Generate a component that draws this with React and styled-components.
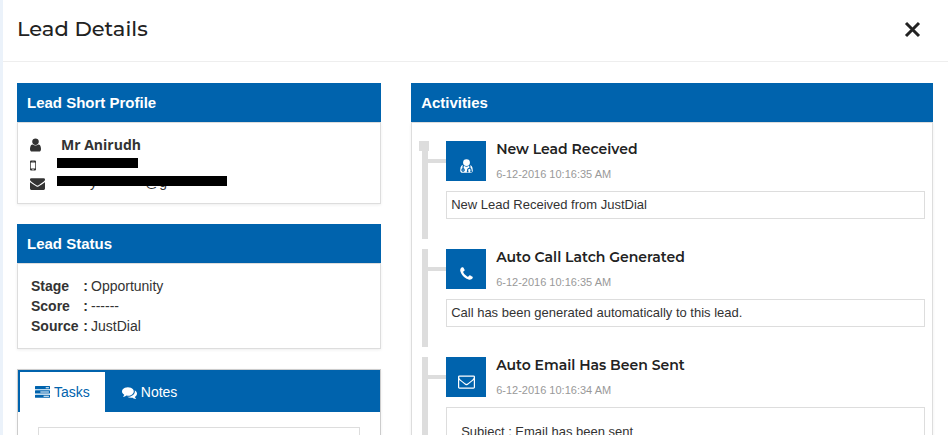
import React from "react";
import styled, { createGlobalStyle } from "styled-components";

const BLUE = "#0063ad";
const LINE = "#dddddd";
const HEADING = 'Montserrat, "Inter", sans-serif';

const GlobalStyle = createGlobalStyle`
  *, *::before, *::after { box-sizing: border-box; }
  body {
    margin: 0;
    background: #ebf2fa;
    color: #333;
    font: 14px/20px "Liberation Sans", Arial, sans-serif;
  }
  h1, h2, h3, p, ul, ol, dl, dd { margin: 0; padding: 0; }
  ul, ol { list-style: none; }
`;

const Dialog = styled.main`
  height: 100vh;
  margin-left: 3px;
  overflow: hidden;
  background: #fff;
`;

const DialogHeader = styled.header`
  display: flex;
  align-items: center;
  justify-content: space-between;
  padding: 14px 27px 17px 14px;
  border-bottom: 1px solid #eee;
`;

const Title = styled.h1`
  color: #222;
  font: 500 21px/30px ${HEADING};
`;

const CloseButton = styled.button`
  display: flex;
  padding: 0;
  border: 0;
  background: none;
  color: #222;
  cursor: pointer;
`;

const Columns = styled.div`
  display: grid;
  grid-template-columns: repeat(12, minmax(0, 1fr));
  align-items: start;
  column-gap: 30px;
  padding: 21px 15px 20px 14px;
`;

const Column = styled.div`
  grid-column: span ${(p) => p.$span};
  display: grid;
  gap: 20px;
`;

const PanelHeader = styled.h2`
  padding: 10px 10px 9px;
  background: ${BLUE};
  color: #fff;
  font-size: 15px;
  line-height: 20px;
`;

const PanelBody = styled.div`
  padding: ${(p) => p.$pad};
  border: 1px solid ${LINE};
  box-shadow: 0 1px 3px rgba(0, 0, 0, 0.07);
`;

const ContactList = styled.ul`
  display: grid;
  grid-template-rows: 22px 18px 18px;
`;

const ContactRow = styled.li`
  display: grid;
  grid-template-columns: 27px 1fr;
  align-items: center;
`;

const Name = styled.strong`
  padding-left: 4px;
  font: 700 14px/20px "Open Sans", sans-serif;
`;

const Masked = styled.span`
  position: relative;
  display: flex;
  gap: 48px;
  width: ${(p) => p.$width};
  height: 10px;
  margin-bottom: 4px;
  padding-left: 33px;
  line-height: 12px;

  &::after {
    content: "";
    position: absolute;
    inset: 0;
    background: #000;
  }
`;

const StatusRow = styled.div`
  display: flex;
  gap: 3px;
`;

const StatusLabel = styled.dt`
  display: flex;
  justify-content: space-between;
  width: 57px;
  font-weight: 700;
`;

const TabPanel = styled.section`
  border: 1px solid #ccc;
  box-shadow: 0 1px 3px rgba(0, 0, 0, 0.07);
`;

const TabBar = styled.div`
  display: flex;
  gap: 2px;
  padding: 2px 2px 0;
  background: ${BLUE};
`;

const Tab = styled.button`
  display: flex;
  align-items: center;
  gap: 4px;
  padding: 10px 15px;
  border: 0;
  background: ${(p) => (p.$active ? "#fff" : "transparent")};
  color: ${(p) => (p.$active ? BLUE : "#fff")};
  font: inherit;
  cursor: pointer;
`;

const TabContent = styled.div`
  padding: 15px 20px;
`;

const TaskBox = styled.div`
  height: 120px;
  border: 1px solid ${LINE};
`;

const Timeline = styled.ol`
  display: grid;
  gap: 10px;
`;

const Entry = styled.li`
  position: relative;
  padding: 0 0 20px 18px;
  border-left: 6px solid ${LINE};

  &::before {
    content: "";
    position: absolute;
    top: 18px;
    left: 0;
    width: 18px;
    height: 4px;
    background: ${LINE};
  }

  &:first-child::after {
    content: "";
    position: absolute;
    top: 0;
    left: -9px;
    width: 10px;
    height: 10px;
    background: ${LINE};
  }
`;

const EntryHead = styled.div`
  display: flex;
  gap: 10px;
  margin-bottom: 10px;
`;

const Badge = styled.span`
  display: flex;
  align-items: center;
  justify-content: center;
  width: 40px;
  height: 40px;
  padding-top: 9px;
  background: ${BLUE};
  color: #fff;
`;

const EntryTitle = styled.h3`
  color: #222;
  font: 600 14px/16px ${HEADING};
`;

const Stamp = styled.time`
  display: block;
  margin-top: 10px;
  color: #999;
  font-size: 11px;
  line-height: 14px;
`;

const Message = styled.p`
  padding: ${(p) => (p.$roomy ? "15px 14px" : "4px")};
  border: 1px solid ${LINE};
  font-size: 13px;
  line-height: 18px;
`;

const GLYPHS = {
  user: [
    1280,
    "M1280 1399q0 109-62.5 187t-150.5 78h-854q-88 0-150.5-78t-62.5-187q0-85 8.5-160.5t31.5-152 58.5-131 94-89 134.5-34.5q131 128 313 128t313-128q76 0 134.5 34.5t94 89 58.5 131 31.5 152 8.5 160.5zm-256-887q0 159-112.5 271.5t-271.5 112.5-271.5-112.5-112.5-271.5 112.5-271.5 271.5-112.5 271.5 112.5 112.5 271.5z",
  ],
  mobile: [
    768,
    "M464 1408a80 80 0 1 0-160 0a80 80 0 1 0 160 0zM672 1248V544q0-32-32-32H128q-32 0-32 32v704q0 32 32 32h512q32 0 32-32zM480 400q0-16-16-16H304q-16 0-16 16t16 16h160q16 0 16-16zM768 384v1024q0 128-128 128H128Q0 1536 0 1408V384Q0 256 128 256h512q128 0 128 128z",
  ],
  envelope: [
    1792,
    "M1792 710v794q0 66-47 113t-113 47h-1472q-66 0-113-47t-47-113v-794q44 49 101 87 362 246 497 345 57 42 92.5 65.5t94.5 48 110 24.5h2q51 0 110-24.5t94.5-48 92.5-65.5q170-123 498-345 57-39 100-87zm0-294q0 79-49 151t-122 123q-376 261-468 325-10 7-42.5 31t-54 38.5-52 32.5-57.5 27-50 9h-2q-23 0-50-9t-57.5-27-52-32.5-54-38.5-42.5-31q-91-64-262-182.5t-205-142.5q-62-42-117-115.5t-55-136.5q0-78 41.5-130t118.5-52h1472q65 0 112.5 47t47.5 113z",
  ],
  envelopeOpen: [
    1792,
    "M1664 1504v-768q-32 36-69 66-268 206-426 338-51 43-83 67t-86.5 48.5-102.5 24.5h-2q-48 0-102.5-24.5t-86.5-48.5-83-67q-158-132-426-338-37-30-69-66v768q0 13 9.5 22.5t22.5 9.5h1472q13 0 22.5-9.5t9.5-22.5zm0-1051v-24.5l-.5-13-3-12.5-5.5-9-9-7.5-14-2.5h-1472q-13 0-22.5 9.5t-9.5 22.5q0 168 147 284 193 152 401 317 6 5 35 29.5t46 37.5 44.5 31.5 50.5 27.5 43 9h2q20 0 43-9t50.5-27.5 44.5-31.5 46-37.5 35-29.5q208-165 401-317 54-43 100.5-115.5t46.5-131.5zm128-37v1088q0 66-47 113t-113 47h-1472q-66 0-113-47t-47-113v-1088q0-66 47-113t113-47h1472q66 0 113 47t47 113z",
  ],
  phone: [
    1408,
    "M1408 1240q0 27-10 70.5t-21 68.5q-21 50-122 106-94 51-186 51-27 0-53-3.5t-57.5-12.5-47-14.5-55.5-20.5-49-18q-98-35-175-83-127-79-264-216t-216-264q-48-77-83-175-3-9-18-49t-20.5-55.5-14.5-47-12.5-57.5-3.5-53q0-92 51-186 56-101 106-122 25-11 68.5-21t70.5-10q14 0 21 3 18 6 53 76 11 19 30 54t35 63.5 31 53.5q3 4 17.5 25t21.5 35.5 7 28.5q0 20-28.5 50t-62 55-62 53-28.5 46q0 9 5 22.5t8.5 20.5 14 24 11.5 19q76 137 174 235t235 174q2 1 19 11.5t24 14 20.5 8.5 22.5 5q18 0 46-28.5t53-62 55-62 50-28.5q14 0 28.5 7t35.5 21.5 25 17.5q25 15 53.5 31t63.5 35 54 30q70 35 76 53 3 7 3 21z",
  ],
  comments: [
    1792,
    "M1408 768q0 139-94 257t-256.5 186.5-353.5 68.5q-86 0-176-16-124 88-278 128-36 9-86 16h-3q-11 0-20.5-8t-11.5-21q-1-3-1-6.5t.5-6.5 2-6l2.5-5 3.5-5.5 4-5 4.5-5 4-4.5q5-6 23-25t26-29.5 22.5-29 25-38.5 20.5-44q-124-72-195-177t-71-224q0-139 94-257t256.5-186.5 353.5-68.5 353.5 68.5 256.5 186.5 94 257zm384 256q0 120-71 224.5t-195 176.5q10 24 20.5 44t25 38.5 22.5 29 26 29.5 23 25q1 1 4 4.5t4.5 5 4 5 3.5 5.5l2.5 5 2 6 .5 6.5-1 6.5q-3 14-13 22t-22 7q-50-7-86-16-154-40-278-128-90 16-176 16-271 0-472-132 58 4 88 4 161 0 309-45t264-129q125-92 192-212t67-254q0-77-23-152 129 71 204 178t75 230z",
  ],
  tasks: [
    1792,
    "M1024 1408h640v-128h-640v128zm-384-512h1024v-128H640v128zm640-512h384V256h-384v128zm512 832v256q0 64-64 64H64q-64 0-64-64v-256q0-64 64-64h1664q64 0 64 64zm0-512v256q0 64-64 64H64q-64 0-64-64V704q0-64 64-64h1664q64 0 64 64zm0-512v256q0 64-64 64H64q-64 0-64-64V192q0-64 64-64h1664q64 0 64 64z",
  ],
  doctor: [
    1408,
    "M1088 512a384 384 0 1 1-768 0a384 384 0 1 1 768 0zM384 1344a64 64 0 1 0-128 0a64 64 0 1 0 128 0zM1408 1405q0 121-73 190t-194 69H267q-121 0-194-69T0 1405q0-400 132-540q70-78 180-82q-56 90-56 241v136q-128 46-128 184q0 80 56 136t136 56t136-56t56-136q0-138-128-184v-136q0-117 46-154q132 101 274 101t274-101q46 50 46 154v64q-106 0-181 75t-75 181v89q-32 29-32 71q0 96 96 96t96-96q0-42-32-71v-89q0-52 38-90t90-38t90 38t38 90v89q-32 29-32 71q0 96 96 96t96-96q0-42-32-71v-89q0-165-128-223v-96q0-151-56-209q110 4 180 82q132 140 132 540z",
  ],
};

function Glyph({ name, size }) {
  const [width, d] = GLYPHS[name];
  return (
    <svg
      width={Math.round((size * width) / 1792)}
      height={size}
      viewBox={`0 0 ${width} 1792`}
      fill="currentColor"
      aria-hidden="true"
    >
      <path d={d} />
    </svg>
  );
}

const STATUS = [
  ["Stage", "Opportunity"],
  ["Score", "------"],
  ["Source", "JustDial"],
];

const ACTIVITIES = [
  { icon: "doctor", title: "New Lead Received", time: "6-12-2016 10:16:35 AM", text: "New Lead Received from JustDial" },
  { icon: "phone", title: "Auto Call Latch Generated", time: "6-12-2016 10:16:35 AM", text: "Call has been generated automatically to this lead." },
  { icon: "envelopeOpen", title: "Auto Email Has Been Sent", time: "6-12-2016 10:16:34 AM", text: "Subject : Email has been sent", roomy: true },
];

export default function App() {
  return (
    <>
      <GlobalStyle />
      <Dialog>
        <DialogHeader>
          <Title>Lead Details</Title>
          <CloseButton type="button" aria-label="Close">
            <svg width="17" height="17" viewBox="0 0 17 17" fill="none" stroke="currentColor" strokeWidth="3">
              <path d="M2 2l13 13M15 2L2 15" />
            </svg>
          </CloseButton>
        </DialogHeader>
        <Columns>
          <Column $span={5}>
            <section>
              <PanelHeader>Lead Short Profile</PanelHeader>
              <PanelBody $pad="11px 12px">
                <ContactList>
                  <ContactRow>
                    <Glyph name="user" size={16} />
                    <Name>Mr Anirudh</Name>
                  </ContactRow>
                  <ContactRow>
                    <Glyph name="mobile" size={15} />
                    <Masked $width="81px" />
                  </ContactRow>
                  <ContactRow>
                    <Glyph name="envelope" size={15} />
                    <Masked $width="170px">
                      <span>y</span>
                      <span>@g</span>
                    </Masked>
                  </ContactRow>
                </ContactList>
              </PanelBody>
            </section>
            <section>
              <PanelHeader>Lead Status</PanelHeader>
              <PanelBody $pad="12px 13px">
                <dl>
                  {STATUS.map(([label, value]) => (
                    <StatusRow key={label}>
                      <StatusLabel>
                        <span>{label}</span>
                        <span>:</span>
                      </StatusLabel>
                      <dd>{value}</dd>
                    </StatusRow>
                  ))}
                </dl>
              </PanelBody>
            </section>
            <TabPanel>
              <TabBar role="tablist">
                <Tab type="button" role="tab" aria-selected="true" $active>
                  <Glyph name="tasks" size={15} />
                  Tasks
                </Tab>
                <Tab type="button" role="tab" aria-selected="false">
                  <Glyph name="comments" size={15} />
                  Notes
                </Tab>
              </TabBar>
              <TabContent role="tabpanel">
                <TaskBox />
              </TabContent>
            </TabPanel>
          </Column>
          <Column $span={7}>
            <section>
              <PanelHeader>Activities</PanelHeader>
              <PanelBody $pad="18px 7px 18px 10px">
                <Timeline>
                  {ACTIVITIES.map((item) => (
                    <Entry key={item.title}>
                      <EntryHead>
                        <Badge>
                          <Glyph name={item.icon} size={item.icon === "envelopeOpen" ? 17 : 16} />
                        </Badge>
                        <div>
                          <EntryTitle>{item.title}</EntryTitle>
                          <Stamp>{item.time}</Stamp>
                        </div>
                      </EntryHead>
                      <Message $roomy={item.roomy}>{item.text}</Message>
                    </Entry>
                  ))}
                </Timeline>
              </PanelBody>
            </section>
          </Column>
        </Columns>
      </Dialog>
    </>
  );
}
